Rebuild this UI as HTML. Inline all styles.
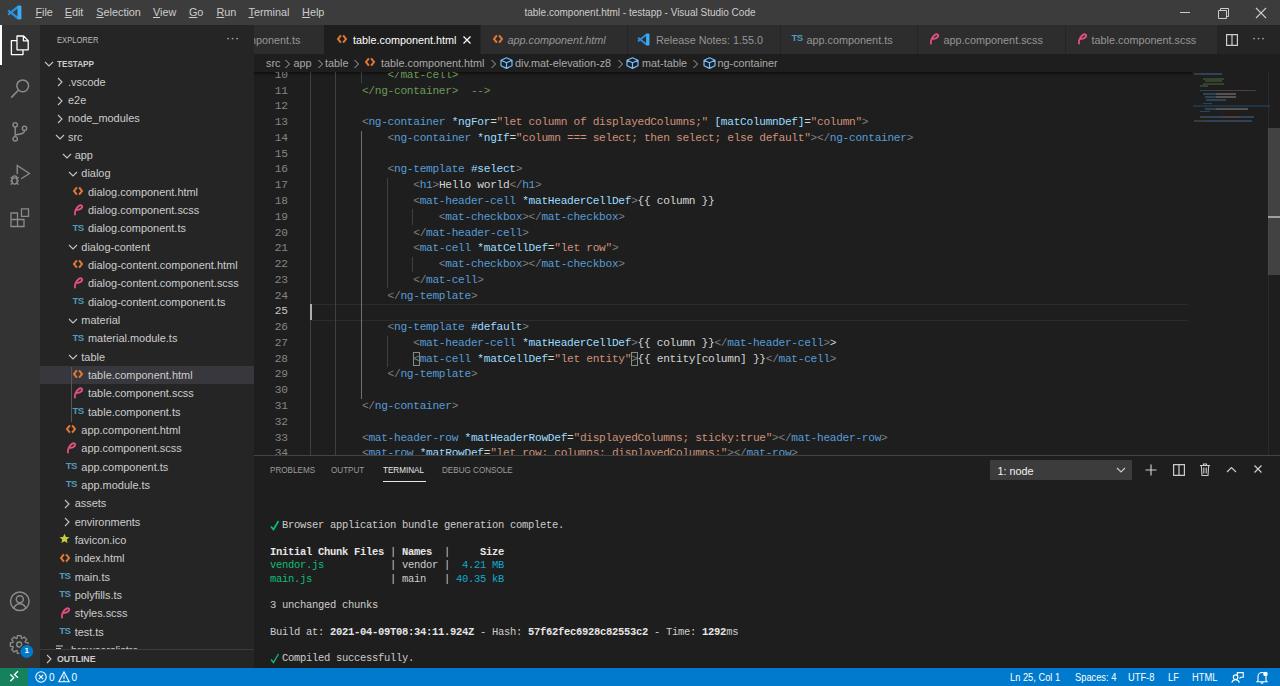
<!DOCTYPE html><html><head><meta charset="utf-8"><style>
*{box-sizing:border-box;margin:0;padding:0}
html,body{width:1280px;height:686px;overflow:hidden;background:#1e1e1e}
body{position:relative;font-family:"Liberation Sans",sans-serif;color:#cccccc}
.a{position:absolute}
.t{position:absolute;white-space:pre;line-height:1}
.mono{font-family:"Liberation Mono",monospace}
svg{position:absolute;overflow:visible}
</style></head><body><div class="a" style="left:0;top:0;width:1280px;height:25px;background:#3c3c3c"></div>
<div class="a" style="left:0;top:25px;width:40px;height:643px;background:#333333"></div>
<div class="a" style="left:40px;top:25px;width:214px;height:643px;background:#252526"></div>
<div class="a" style="left:254px;top:25px;width:1026px;height:29px;background:#252526"></div>
<div class="a" style="left:0;top:668px;width:1280px;height:18px;background:#007acc"></div>
<div class="a" style="left:0;top:668px;width:28px;height:18px;background:#16825d"></div>
<div class="t" style="left:35.4px;top:7.4px;font-size:10.83px;color:#cccccc"><span style="text-decoration:underline;text-underline-offset:0.8px;text-decoration-thickness:0.8px">F</span>ile</div>
<div class="t" style="left:64.7px;top:7.4px;font-size:10.83px;color:#cccccc"><span style="text-decoration:underline;text-underline-offset:0.8px;text-decoration-thickness:0.8px">E</span>dit</div>
<div class="t" style="left:96.3px;top:7.4px;font-size:10.83px;color:#cccccc"><span style="text-decoration:underline;text-underline-offset:0.8px;text-decoration-thickness:0.8px">S</span>election</div>
<div class="t" style="left:153.0px;top:7.4px;font-size:10.83px;color:#cccccc"><span style="text-decoration:underline;text-underline-offset:0.8px;text-decoration-thickness:0.8px">V</span>iew</div>
<div class="t" style="left:188.9px;top:7.4px;font-size:10.83px;color:#cccccc"><span style="text-decoration:underline;text-underline-offset:0.8px;text-decoration-thickness:0.8px">G</span>o</div>
<div class="t" style="left:216.5px;top:7.4px;font-size:10.83px;color:#cccccc"><span style="text-decoration:underline;text-underline-offset:0.8px;text-decoration-thickness:0.8px">R</span>un</div>
<div class="t" style="left:248.5px;top:7.4px;font-size:10.83px;color:#cccccc"><span style="text-decoration:underline;text-underline-offset:0.8px;text-decoration-thickness:0.8px">T</span>erminal</div>
<div class="t" style="left:302.1px;top:7.4px;font-size:10.83px;color:#cccccc"><span style="text-decoration:underline;text-underline-offset:0.8px;text-decoration-thickness:0.8px">H</span>elp</div>
<div class="t" style="left:0;width:1280px;text-align:center;top:7.5px;font-size:10px;color:#cccccc">table.component.html - testapp - Visual Studio Code</div>
<svg style="left:7px;top:5px" width="15" height="15" viewBox="0 0 100 100"><path d="M76 10L8 64 M76 90L8 36" stroke="#2a8fdc" stroke-width="15" fill="none"/><rect x="70" y="3" width="26" height="94" rx="8" fill="#3aaaf2"/></svg>
<div class="a" style="left:1180px;top:12px;width:10px;height:1px;background:#cccccc"></div>
<svg style="left:1218px;top:7.5px" width="11" height="11" viewBox="0 0 11 11"><path d="M0.5 2.5h8v8h-8z M2.5 2.5v-2h8v8h-2" fill="none" stroke="#cccccc" stroke-width="1"/></svg>
<svg style="left:1256px;top:7.5px" width="10" height="10" viewBox="0 0 10 10"><path d="M0 0L10 10M10 0L0 10" stroke="#cccccc" stroke-width="1.1"/></svg>
<div class="a" style="left:0;top:25px;width:2px;height:40px;background:#ffffff"></div>
<svg style="left:10px;top:35px" width="20" height="21" viewBox="0 0 20 21"><path d="M7 1h6.6l4.6 4.6v9.2h-11.2z M13.4 1.2v4.6h4.6" fill="none" stroke="#ffffff" stroke-width="1.3" stroke-linejoin="round"/><path d="M7 5.6h-5.6v14h11.6v-4.6" fill="none" stroke="#ffffff" stroke-width="1.3" stroke-linejoin="round"/></svg>
<svg style="left:9px;top:77px" width="22" height="22" viewBox="0 0 22 22"><circle cx="13.7" cy="8.8" r="5.9" fill="none" stroke="#8b8b8b" stroke-width="1.5"/><path d="M9.6 13L2.2 20.6" stroke="#8b8b8b" stroke-width="1.6"/></svg>
<svg style="left:10px;top:120px" width="20" height="22" viewBox="0 0 20 22"><circle cx="5.2" cy="4.8" r="2.2" fill="none" stroke="#8b8b8b" stroke-width="1.4"/><circle cx="14.5" cy="8.3" r="2.2" fill="none" stroke="#8b8b8b" stroke-width="1.4"/><circle cx="5.2" cy="18.8" r="2.2" fill="none" stroke="#8b8b8b" stroke-width="1.4"/><path d="M5.2 7v9.6 M14.5 10.5c0 3-3 3.5-9.3 4.5" fill="none" stroke="#8b8b8b" stroke-width="1.4"/></svg>
<svg style="left:0;top:0" width="40" height="200"><path d="M17.2 174.2V165.5L29.4 173.5L21.2 178.8" fill="none" stroke="#8b8b8b" stroke-width="1.35" stroke-linejoin="miter"/><path d="M12.3 178.2a2.3 2.3 0 0 1 4.6 0" fill="none" stroke="#8b8b8b" stroke-width="1.3"/><ellipse cx="14.6" cy="181" rx="2.7" ry="3.1" fill="none" stroke="#8b8b8b" stroke-width="1.4"/><path d="M10.6 177.3l1.8 1.6 M18.6 177.3l-1.8 1.6 M10.4 181h1.6 M17.2 181h1.6 M10.6 184.6l1.8-1.4 M18.6 184.6l-1.8-1.4" stroke="#8b8b8b" stroke-width="1.3"/></svg>
<svg style="left:10px;top:208px" width="21" height="21" viewBox="0 0 21 21"><path d="M1 5h6.5v6.5h6.5v7h-13z M1 11.5h6.5v7 M11.5 0.8h7v7.5h-7z" fill="none" stroke="#8b8b8b" stroke-width="1.3"/></svg>
<svg style="left:9px;top:591px" width="22" height="22" viewBox="0 0 22 22"><circle cx="10.8" cy="10.3" r="9.3" fill="none" stroke="#8b8b8b" stroke-width="1.5"/><circle cx="10.8" cy="8.2" r="3.5" fill="none" stroke="#8b8b8b" stroke-width="1.5"/><path d="M4.6 17.2c1.5-3 3.7-4.4 6.2-4.4s4.7 1.4 6.2 4.4" fill="none" stroke="#8b8b8b" stroke-width="1.5"/></svg>
<svg style="left:0;top:0" width="40" height="686"><path d="M17.00 638.28 L17.41 635.68 L20.99 635.68 L21.40 638.28 L22.04 638.54 L24.17 637.00 L26.70 639.53 L25.16 641.66 L25.42 642.30 L28.02 642.71 L28.02 646.29 L25.42 646.70 L25.16 647.34 L26.70 649.47 L24.17 652.00 L22.04 650.46 L21.40 650.72 L20.99 653.32 L17.41 653.32 L17.00 650.72 L16.36 650.46 L14.23 652.00 L11.70 649.47 L13.24 647.34 L12.98 646.70 L10.38 646.29 L10.38 642.71 L12.98 642.30 L13.24 641.66 L11.70 639.53 L14.23 637.00 L16.36 638.54Z" fill="none" stroke="#8b8b8b" stroke-width="1.35" stroke-linejoin="round"/><circle cx="19.2" cy="644.5" r="2.5" fill="none" stroke="#8b8b8b" stroke-width="1.35"/><circle cx="26.8" cy="651.5" r="7.6" fill="#333333"/><circle cx="26.8" cy="651.5" r="6.4" fill="#007acc"/></svg>
<div class="t" style="left:22.8px;top:647.3px;width:8px;text-align:center;font-size:8px;font-weight:bold;color:#fff">1</div>
<div class="t" style="left:56.6px;top:35.6px;font-size:9.17px;color:#bbbbbb;transform:scaleX(0.83);transform-origin:0 0">EXPLORER</div>
<div class="t" style="left:226px;top:32px;font-size:12px;color:#cccccc;letter-spacing:0.5px">···</div>
<svg style="left:43.5px;top:59px" width="10" height="10" viewBox="0 0 10 10"><path d="M1 3l4 4 4-4" fill="none" stroke="#c5c5c5" stroke-width="1.1"/></svg>
<div class="t" style="left:57px;top:59.5px;font-size:9.17px;font-weight:bold;color:#cccccc;transform:scaleX(0.89);transform-origin:0 0">TESTAPP</div>
<div class="a" style="left:40px;top:366px;width:214px;height:18px;background:#37373d"></div>
<div class="a" style="left:70.8px;top:366.63px;width:1px;height:55.00px;background:#585858"></div>
<svg style="left:55.0px;top:77.47px" width="10" height="10" viewBox="0 0 10 10"><path d="M3 1l4 4-4 4" fill="none" stroke="#c5c5c5" stroke-width="1.1"/></svg>
<div class="t" style="left:68.0px;top:76.72px;font-size:10.95px;color:#cccccc;">.vscode</div>
<svg style="left:55.0px;top:95.803px" width="10" height="10" viewBox="0 0 10 10"><path d="M3 1l4 4-4 4" fill="none" stroke="#c5c5c5" stroke-width="1.1"/></svg>
<div class="t" style="left:68.0px;top:95.053px;font-size:10.95px;color:#cccccc;">e2e</div>
<svg style="left:55.0px;top:114.136px" width="10" height="10" viewBox="0 0 10 10"><path d="M3 1l4 4-4 4" fill="none" stroke="#c5c5c5" stroke-width="1.1"/></svg>
<div class="t" style="left:68.0px;top:113.386px;font-size:10.95px;color:#cccccc;">node_modules</div>
<svg style="left:55.0px;top:132.46899999999997px" width="10" height="10" viewBox="0 0 10 10"><path d="M1 3l4 4 4-4" fill="none" stroke="#c5c5c5" stroke-width="1.1"/></svg>
<div class="t" style="left:68.0px;top:131.71899999999997px;font-size:10.95px;color:#cccccc;">src</div>
<svg style="left:61.667px;top:150.802px" width="10" height="10" viewBox="0 0 10 10"><path d="M1 3l4 4 4-4" fill="none" stroke="#c5c5c5" stroke-width="1.1"/></svg>
<div class="t" style="left:74.667px;top:150.052px;font-size:10.95px;color:#cccccc;">app</div>
<svg style="left:68.334px;top:169.13499999999996px" width="10" height="10" viewBox="0 0 10 10"><path d="M1 3l4 4 4-4" fill="none" stroke="#c5c5c5" stroke-width="1.1"/></svg>
<div class="t" style="left:81.334px;top:168.38499999999996px;font-size:10.95px;color:#cccccc;">dialog</div>
<svg style="left:73.001px;top:185.968px" width="10" height="10" viewBox="0 0 10 10"><path d="M3.9 1.3L1 5l2.9 3.7 M6.1 1.3L9 5l-2.9 3.7" fill="none" stroke="#e37933" stroke-width="2"/></svg>
<div class="t" style="left:88.001px;top:186.718px;font-size:10.95px;color:#cccccc;">dialog.component.html</div>
<svg style="left:73.001px;top:202.80099999999996px" width="11" height="13" viewBox="0 0 11 13"><path d="M2 11.6C1.3 9 3.2 5 5.5 3.2 7.5 1.6 9.6 2.2 9.2 4 8.8 5.8 6 7 3.9 6.8" fill="none" stroke="#e2507e" stroke-width="1.9" stroke-linecap="round"/></svg>
<div class="t" style="left:88.001px;top:205.05099999999996px;font-size:10.95px;color:#cccccc;">dialog.component.scss</div>
<div class="t" style="left:72.501px;top:222.534px;font-size:9.6px;font-weight:bold;color:#519aba;letter-spacing:-0.6px;transform:scaleX(1.0)">TS</div>
<div class="t" style="left:88.001px;top:223.384px;font-size:10.95px;color:#cccccc;">dialog.component.ts</div>
<svg style="left:68.334px;top:242.46699999999996px" width="10" height="10" viewBox="0 0 10 10"><path d="M1 3l4 4 4-4" fill="none" stroke="#c5c5c5" stroke-width="1.1"/></svg>
<div class="t" style="left:81.334px;top:241.71699999999996px;font-size:10.95px;color:#cccccc;">dialog-content</div>
<svg style="left:73.001px;top:259.3px" width="10" height="10" viewBox="0 0 10 10"><path d="M3.9 1.3L1 5l2.9 3.7 M6.1 1.3L9 5l-2.9 3.7" fill="none" stroke="#e37933" stroke-width="2"/></svg>
<div class="t" style="left:88.001px;top:260.05px;font-size:10.95px;color:#cccccc;">dialog-content.component.html</div>
<svg style="left:73.001px;top:276.133px" width="11" height="13" viewBox="0 0 11 13"><path d="M2 11.6C1.3 9 3.2 5 5.5 3.2 7.5 1.6 9.6 2.2 9.2 4 8.8 5.8 6 7 3.9 6.8" fill="none" stroke="#e2507e" stroke-width="1.9" stroke-linecap="round"/></svg>
<div class="t" style="left:88.001px;top:278.383px;font-size:10.95px;color:#cccccc;">dialog-content.component.scss</div>
<div class="t" style="left:72.501px;top:295.866px;font-size:9.6px;font-weight:bold;color:#519aba;letter-spacing:-0.6px;transform:scaleX(1.0)">TS</div>
<div class="t" style="left:88.001px;top:296.716px;font-size:10.95px;color:#cccccc;">dialog-content.component.ts</div>
<svg style="left:68.334px;top:315.799px" width="10" height="10" viewBox="0 0 10 10"><path d="M1 3l4 4 4-4" fill="none" stroke="#c5c5c5" stroke-width="1.1"/></svg>
<div class="t" style="left:81.334px;top:315.049px;font-size:10.95px;color:#cccccc;">material</div>
<div class="t" style="left:72.501px;top:332.532px;font-size:9.6px;font-weight:bold;color:#519aba;letter-spacing:-0.6px;transform:scaleX(1.0)">TS</div>
<div class="t" style="left:88.001px;top:333.382px;font-size:10.95px;color:#cccccc;">material.module.ts</div>
<svg style="left:68.334px;top:352.46500000000003px" width="10" height="10" viewBox="0 0 10 10"><path d="M1 3l4 4 4-4" fill="none" stroke="#c5c5c5" stroke-width="1.1"/></svg>
<div class="t" style="left:81.334px;top:351.71500000000003px;font-size:10.95px;color:#cccccc;">table</div>
<svg style="left:73.001px;top:369.298px" width="10" height="10" viewBox="0 0 10 10"><path d="M3.9 1.3L1 5l2.9 3.7 M6.1 1.3L9 5l-2.9 3.7" fill="none" stroke="#e37933" stroke-width="2"/></svg>
<div class="t" style="left:88.001px;top:370.048px;font-size:10.95px;color:#cccccc;">table.component.html</div>
<svg style="left:73.001px;top:386.131px" width="11" height="13" viewBox="0 0 11 13"><path d="M2 11.6C1.3 9 3.2 5 5.5 3.2 7.5 1.6 9.6 2.2 9.2 4 8.8 5.8 6 7 3.9 6.8" fill="none" stroke="#e2507e" stroke-width="1.9" stroke-linecap="round"/></svg>
<div class="t" style="left:88.001px;top:388.381px;font-size:10.95px;color:#cccccc;">table.component.scss</div>
<div class="t" style="left:72.501px;top:405.864px;font-size:9.6px;font-weight:bold;color:#519aba;letter-spacing:-0.6px;transform:scaleX(1.0)">TS</div>
<div class="t" style="left:88.001px;top:406.714px;font-size:10.95px;color:#cccccc;">table.component.ts</div>
<svg style="left:66.334px;top:424.297px" width="10" height="10" viewBox="0 0 10 10"><path d="M3.9 1.3L1 5l2.9 3.7 M6.1 1.3L9 5l-2.9 3.7" fill="none" stroke="#e37933" stroke-width="2"/></svg>
<div class="t" style="left:81.334px;top:425.047px;font-size:10.95px;color:#cccccc;">app.component.html</div>
<svg style="left:66.334px;top:441.13px" width="11" height="13" viewBox="0 0 11 13"><path d="M2 11.6C1.3 9 3.2 5 5.5 3.2 7.5 1.6 9.6 2.2 9.2 4 8.8 5.8 6 7 3.9 6.8" fill="none" stroke="#e2507e" stroke-width="1.9" stroke-linecap="round"/></svg>
<div class="t" style="left:81.334px;top:443.38px;font-size:10.95px;color:#cccccc;">app.component.scss</div>
<div class="t" style="left:65.834px;top:460.86299999999994px;font-size:9.6px;font-weight:bold;color:#519aba;letter-spacing:-0.6px;transform:scaleX(1.0)">TS</div>
<div class="t" style="left:81.334px;top:461.71299999999997px;font-size:10.95px;color:#cccccc;">app.component.ts</div>
<div class="t" style="left:65.834px;top:479.19599999999997px;font-size:9.6px;font-weight:bold;color:#519aba;letter-spacing:-0.6px;transform:scaleX(1.0)">TS</div>
<div class="t" style="left:81.334px;top:480.046px;font-size:10.95px;color:#cccccc;">app.module.ts</div>
<svg style="left:61.667px;top:499.129px" width="10" height="10" viewBox="0 0 10 10"><path d="M3 1l4 4-4 4" fill="none" stroke="#c5c5c5" stroke-width="1.1"/></svg>
<div class="t" style="left:74.667px;top:498.379px;font-size:10.95px;color:#cccccc;">assets</div>
<svg style="left:61.667px;top:517.4619999999999px" width="10" height="10" viewBox="0 0 10 10"><path d="M3 1l4 4-4 4" fill="none" stroke="#c5c5c5" stroke-width="1.1"/></svg>
<div class="t" style="left:74.667px;top:516.7119999999999px;font-size:10.95px;color:#cccccc;">environments</div>
<svg style="left:59.167px;top:533.2949999999998px" width="11" height="11" viewBox="0 0 24 24"><path d="M12 1.5l3.2 7 7.5.7-5.7 5 1.7 7.4L12 17.8l-6.7 3.8 1.7-7.4-5.7-5 7.5-.7z" fill="#cbcb41"/></svg>
<div class="t" style="left:74.667px;top:535.0449999999998px;font-size:10.95px;color:#cccccc;">favicon.ico</div>
<svg style="left:59.667px;top:552.6279999999999px" width="10" height="10" viewBox="0 0 10 10"><path d="M3.9 1.3L1 5l2.9 3.7 M6.1 1.3L9 5l-2.9 3.7" fill="none" stroke="#e37933" stroke-width="2"/></svg>
<div class="t" style="left:74.667px;top:553.3779999999999px;font-size:10.95px;color:#cccccc;">index.html</div>
<div class="t" style="left:59.167px;top:570.8609999999999px;font-size:9.6px;font-weight:bold;color:#519aba;letter-spacing:-0.6px;transform:scaleX(1.0)">TS</div>
<div class="t" style="left:74.667px;top:571.7109999999999px;font-size:10.95px;color:#cccccc;">main.ts</div>
<div class="t" style="left:59.167px;top:589.1939999999998px;font-size:9.6px;font-weight:bold;color:#519aba;letter-spacing:-0.6px;transform:scaleX(1.0)">TS</div>
<div class="t" style="left:74.667px;top:590.0439999999999px;font-size:10.95px;color:#cccccc;">polyfills.ts</div>
<svg style="left:59.667px;top:606.1269999999998px" width="11" height="13" viewBox="0 0 11 13"><path d="M2 11.6C1.3 9 3.2 5 5.5 3.2 7.5 1.6 9.6 2.2 9.2 4 8.8 5.8 6 7 3.9 6.8" fill="none" stroke="#e2507e" stroke-width="1.9" stroke-linecap="round"/></svg>
<div class="t" style="left:74.667px;top:608.3769999999998px;font-size:10.95px;color:#cccccc;">styles.scss</div>
<div class="t" style="left:59.167px;top:625.8599999999999px;font-size:9.6px;font-weight:bold;color:#519aba;letter-spacing:-0.6px;transform:scaleX(1.0)">TS</div>
<div class="t" style="left:74.667px;top:626.7099999999999px;font-size:10.95px;color:#cccccc;">test.ts</div>
<svg style="left:55.0px;top:643.7929999999999px" width="10" height="10" viewBox="0 0 10 10"><path d="M1 2h7M1 4.5h5M1 7h7" stroke="#c5c5c5" stroke-width="1.2"/></svg>
<div class="t" style="left:68.0px;top:645.0429999999999px;font-size:10.95px;color:#cccccc;">.browserslistrc</div>
<div class="a" style="left:40px;top:649px;width:214px;height:19px;background:#252526;border-top:1px solid #3c3c3c"></div>
<svg style="left:43.5px;top:653.5px" width="10" height="10" viewBox="0 0 10 10"><path d="M3 1l4 4-4 4" fill="none" stroke="#c5c5c5" stroke-width="1.1"/></svg>
<div class="t" style="left:57px;top:655.2px;font-size:9.17px;font-weight:bold;color:#cccccc;transform:scaleX(0.96);transform-origin:0 0">OUTLINE</div>
<div class="a" style="left:254px;top:25px;width:70px;height:29px;background:#2d2d2d;"></div>
<div class="a" style="left:254px;top:25px;width:70px;height:29px;overflow:hidden"><div class="t" style="right:23.5px;top:10.2px;font-size:10.83px;color:#969696">table.component.ts</div></div>
<div class="a" style="left:324px;top:25px;width:156px;height:29px;background:#1e1e1e;"></div>
<svg style="left:337px;top:34.2px" width="10" height="10" viewBox="0 0 10 10"><path d="M3.9 1.3L1 5l2.9 3.7 M6.1 1.3L9 5l-2.9 3.7" fill="none" stroke="#e37933" stroke-width="2"/></svg>
<div class="t" style="left:353px;top:35.2px;font-size:10.83px;color:#ffffff;">table.component.html</div>
<svg style="left:463px;top:35.5px" width="8" height="8" viewBox="0 0 8 8"><path d="M0.5 0.5L7.5 7.5M7.5 0.5L0.5 7.5" stroke="#ffffff" stroke-width="1.2"/></svg>
<div class="a" style="left:480px;top:25px;width:147px;height:29px;background:#2d2d2d;border-left:1px solid #252526"></div>
<svg style="left:493px;top:34.2px" width="10" height="10" viewBox="0 0 10 10"><path d="M3.9 1.3L1 5l2.9 3.7 M6.1 1.3L9 5l-2.9 3.7" fill="none" stroke="#e37933" stroke-width="2"/></svg>
<div class="t" style="left:507.5px;top:35.2px;font-size:10.83px;color:#969696;font-style:italic;">app.component.html</div>
<div class="a" style="left:627px;top:25px;width:153px;height:29px;background:#2d2d2d;border-left:1px solid #252526"></div>
<svg style="left:637px;top:33px" width="13" height="13" viewBox="0 0 100 100"><path d="M76 10L8 64 M76 90L8 36" stroke="#2a8fdc" stroke-width="15" fill="none"/><rect x="70" y="3" width="26" height="94" rx="8" fill="#3aaaf2"/></svg>
<div class="t" style="left:656px;top:35.2px;font-size:10.83px;color:#969696;">Release Notes: 1.55.0</div>
<div class="a" style="left:780px;top:25px;width:137px;height:29px;background:#2d2d2d;border-left:1px solid #252526"></div>
<div class="t" style="left:791.5px;top:33.4px;font-size:9.6px;font-weight:bold;color:#519aba;letter-spacing:-0.6px;transform:scaleX(1.0)">TS</div>
<div class="t" style="left:806.5px;top:35.2px;font-size:10.83px;color:#969696;">app.component.ts</div>
<div class="a" style="left:917px;top:25px;width:148px;height:29px;background:#2d2d2d;border-left:1px solid #252526"></div>
<svg style="left:929px;top:32px" width="11" height="13" viewBox="0 0 11 13"><path d="M2 11.6C1.3 9 3.2 5 5.5 3.2 7.5 1.6 9.6 2.2 9.2 4 8.8 5.8 6 7 3.9 6.8" fill="none" stroke="#e2507e" stroke-width="1.9" stroke-linecap="round"/></svg>
<div class="t" style="left:943.5px;top:35.2px;font-size:10.83px;color:#969696;">app.component.scss</div>
<div class="a" style="left:1065px;top:25px;width:151.5px;height:29px;background:#2d2d2d;border-left:1px solid #252526"></div>
<svg style="left:1077px;top:32px" width="11" height="13" viewBox="0 0 11 13"><path d="M2 11.6C1.3 9 3.2 5 5.5 3.2 7.5 1.6 9.6 2.2 9.2 4 8.8 5.8 6 7 3.9 6.8" fill="none" stroke="#e2507e" stroke-width="1.9" stroke-linecap="round"/></svg>
<div class="t" style="left:1091.5px;top:35.2px;font-size:10.83px;color:#969696;">table.component.scss</div>
<svg style="left:1226px;top:34px" width="12" height="12" viewBox="0 0 12 12"><path d="M0.6 0.6h10.8v10.8h-10.8z M6 0.6v10.8" fill="none" stroke="#cccccc" stroke-width="1.2"/></svg>
<div class="t" style="left:1252px;top:32px;font-size:12px;color:#cccccc;letter-spacing:0.5px">···</div>
<div class="t" style="left:266px;top:58.3px;font-size:10.83px;color:#a9a9a9;">src</div>
<svg style="left:284px;top:58.5px" width="7" height="10" viewBox="0 0 7 10"><path d="M1.5 1l4 4-4 4" fill="none" stroke="#a9a9a9" stroke-width="1"/></svg>
<div class="t" style="left:293.4px;top:58.3px;font-size:10.83px;color:#a9a9a9;">app</div>
<svg style="left:317px;top:58.5px" width="7" height="10" viewBox="0 0 7 10"><path d="M1.5 1l4 4-4 4" fill="none" stroke="#a9a9a9" stroke-width="1"/></svg>
<div class="t" style="left:325px;top:58.3px;font-size:10.83px;color:#a9a9a9;">table</div>
<svg style="left:353px;top:58.5px" width="7" height="10" viewBox="0 0 7 10"><path d="M1.5 1l4 4-4 4" fill="none" stroke="#a9a9a9" stroke-width="1"/></svg>
<svg style="left:365px;top:57.0px" width="10" height="10" viewBox="0 0 10 10"><path d="M3.9 1.3L1 5l2.9 3.7 M6.1 1.3L9 5l-2.9 3.7" fill="none" stroke="#e37933" stroke-width="2"/></svg>
<div class="t" style="left:381px;top:58.3px;font-size:10.83px;color:#a9a9a9;">table.component.html</div>
<svg style="left:489.5px;top:58.5px" width="7" height="10" viewBox="0 0 7 10"><path d="M1.5 1l4 4-4 4" fill="none" stroke="#a9a9a9" stroke-width="1"/></svg>
<svg style="left:500px;top:57px" width="13" height="12" viewBox="0 0 13 12"><path d="M6.5 0.8l5.5 2.4v5.6l-5.5 2.6-5.5-2.6v-5.6z M1 3.2l5.5 2.6 5.5-2.6 M6.5 5.8v5.4" fill="none" stroke="#75beff" stroke-width="1.2" stroke-linejoin="round"/></svg>
<div class="t" style="left:515px;top:58.3px;font-size:10.83px;color:#a9a9a9;">div.mat-elevation-z8</div>
<svg style="left:617px;top:58.5px" width="7" height="10" viewBox="0 0 7 10"><path d="M1.5 1l4 4-4 4" fill="none" stroke="#a9a9a9" stroke-width="1"/></svg>
<svg style="left:626px;top:57px" width="13" height="12" viewBox="0 0 13 12"><path d="M6.5 0.8l5.5 2.4v5.6l-5.5 2.6-5.5-2.6v-5.6z M1 3.2l5.5 2.6 5.5-2.6 M6.5 5.8v5.4" fill="none" stroke="#75beff" stroke-width="1.2" stroke-linejoin="round"/></svg>
<div class="t" style="left:642px;top:58.3px;font-size:10.83px;color:#a9a9a9;">mat-table</div>
<svg style="left:691.5px;top:58.5px" width="7" height="10" viewBox="0 0 7 10"><path d="M1.5 1l4 4-4 4" fill="none" stroke="#a9a9a9" stroke-width="1"/></svg>
<svg style="left:702.5px;top:57px" width="13" height="12" viewBox="0 0 13 12"><path d="M6.5 0.8l5.5 2.4v5.6l-5.5 2.6-5.5-2.6v-5.6z M1 3.2l5.5 2.6 5.5-2.6 M6.5 5.8v5.4" fill="none" stroke="#75beff" stroke-width="1.2" stroke-linejoin="round"/></svg>
<div class="t" style="left:717.5px;top:58.3px;font-size:10.83px;color:#a9a9a9;">ng-container</div>
<div class="a" style="left:254px;top:72px;width:938px;height:4px;background:linear-gradient(#000000 0%, rgba(0,0,0,0) 100%);opacity:0.5"></div>
<div class="a" style="left:254px;top:72px;width:1026px;height:383px;overflow:hidden">
<div class="a" style="left:55.69999999999999px;top:231.71px;width:878.3px;height:16.97px;border:1.3px solid #2c2c2c;border-right:none"></div>
<div class="a" style="left:56px;top:-20.31px;width:1px;height:425.79px;background:#404040"></div>
<div class="a" style="left:81px;top:-20.31px;width:1px;height:425.79px;background:#404040"></div>
<div class="a" style="left:107px;top:-20.31px;width:1px;height:31.54px;background:#404040"></div>
<div class="a" style="left:107px;top:58.54px;width:1px;height:268.09px;background:#707070"></div>
<div class="a" style="left:133px;top:105.85px;width:1px;height:110.39px;background:#404040"></div>
<div class="a" style="left:133px;top:263.55px;width:1px;height:31.54px;background:#404040"></div>
<div class="a" style="left:158px;top:137.39px;width:1px;height:15.77px;background:#404040"></div>
<div class="a" style="left:158px;top:184.70px;width:1px;height:15.77px;background:#404040"></div>
<div class="a" style="left:56px;top:232.01px;width:1.5px;height:15.77px;background:#aeafad"></div>
<div class="a" style="left:159.32px;top:280.32px;width:6.41px;height:13.77px;border:1px solid #888888;background:rgba(0,100,0,0.1)"></div>
<div class="a" style="left:377.40px;top:280.32px;width:6.41px;height:13.77px;border:1px solid #888888;background:rgba(0,100,0,0.1)"></div>
<div class="t mono" style="left:-14px;width:47.694px;text-align:right;top:-2.14px;font-size:11.2px;letter-spacing:-0.306px;color:#858585">10</div>
<div class="t mono" style="left:56.70px;top:-2.14px;font-size:11.2px;letter-spacing:-0.306px"><span style="color:#6a9955">            &lt;/mat-cell&gt;</span></div>
<div class="t mono" style="left:-14px;width:47.694px;text-align:right;top:13.63px;font-size:11.2px;letter-spacing:-0.306px;color:#858585">11</div>
<div class="t mono" style="left:56.70px;top:13.63px;font-size:11.2px;letter-spacing:-0.306px"><span style="color:#6a9955">        &lt;/ng-container&gt;  --&gt;</span></div>
<div class="t mono" style="left:-14px;width:47.694px;text-align:right;top:29.40px;font-size:11.2px;letter-spacing:-0.306px;color:#858585">12</div>
<div class="t mono" style="left:-14px;width:47.694px;text-align:right;top:45.17px;font-size:11.2px;letter-spacing:-0.306px;color:#858585">13</div>
<div class="t mono" style="left:56.70px;top:45.17px;font-size:11.2px;letter-spacing:-0.306px"><span style="color:#d4d4d4">        </span><span style="color:#808080">&lt;</span><span style="color:#569cd6">ng-container</span><span style="color:#d4d4d4"> </span><span style="color:#9cdcfe">*ngFor</span><span style="color:#d4d4d4">=</span><span style="color:#ce9178">"let column of displayedColumns;"</span><span style="color:#d4d4d4"> </span><span style="color:#9cdcfe">[matColumnDef]</span><span style="color:#d4d4d4">=</span><span style="color:#ce9178">"column"</span><span style="color:#808080">&gt;</span></div>
<div class="t mono" style="left:-14px;width:47.694px;text-align:right;top:60.94px;font-size:11.2px;letter-spacing:-0.306px;color:#858585">14</div>
<div class="t mono" style="left:56.70px;top:60.94px;font-size:11.2px;letter-spacing:-0.306px"><span style="color:#d4d4d4">            </span><span style="color:#808080">&lt;</span><span style="color:#569cd6">ng-container</span><span style="color:#d4d4d4"> </span><span style="color:#9cdcfe">*ngIf</span><span style="color:#d4d4d4">=</span><span style="color:#ce9178">"column === select; then select; else default"</span><span style="color:#808080">&gt;&lt;/</span><span style="color:#569cd6">ng-container</span><span style="color:#808080">&gt;</span></div>
<div class="t mono" style="left:-14px;width:47.694px;text-align:right;top:76.71px;font-size:11.2px;letter-spacing:-0.306px;color:#858585">15</div>
<div class="t mono" style="left:-14px;width:47.694px;text-align:right;top:92.48px;font-size:11.2px;letter-spacing:-0.306px;color:#858585">16</div>
<div class="t mono" style="left:56.70px;top:92.48px;font-size:11.2px;letter-spacing:-0.306px"><span style="color:#d4d4d4">            </span><span style="color:#808080">&lt;</span><span style="color:#569cd6">ng-template</span><span style="color:#d4d4d4"> </span><span style="color:#9cdcfe">#select</span><span style="color:#808080">&gt;</span></div>
<div class="t mono" style="left:-14px;width:47.694px;text-align:right;top:108.25px;font-size:11.2px;letter-spacing:-0.306px;color:#858585">17</div>
<div class="t mono" style="left:56.70px;top:108.25px;font-size:11.2px;letter-spacing:-0.306px"><span style="color:#d4d4d4">                </span><span style="color:#808080">&lt;</span><span style="color:#569cd6">h1</span><span style="color:#808080">&gt;</span><span style="color:#d4d4d4">Hello world</span><span style="color:#808080">&lt;/</span><span style="color:#569cd6">h1</span><span style="color:#808080">&gt;</span></div>
<div class="t mono" style="left:-14px;width:47.694px;text-align:right;top:124.02px;font-size:11.2px;letter-spacing:-0.306px;color:#858585">18</div>
<div class="t mono" style="left:56.70px;top:124.02px;font-size:11.2px;letter-spacing:-0.306px"><span style="color:#d4d4d4">                </span><span style="color:#808080">&lt;</span><span style="color:#569cd6">mat-header-cell</span><span style="color:#d4d4d4"> </span><span style="color:#9cdcfe">*matHeaderCellDef</span><span style="color:#808080">&gt;</span><span style="color:#d4d4d4">{{ column }}</span></div>
<div class="t mono" style="left:-14px;width:47.694px;text-align:right;top:139.79px;font-size:11.2px;letter-spacing:-0.306px;color:#858585">19</div>
<div class="t mono" style="left:56.70px;top:139.79px;font-size:11.2px;letter-spacing:-0.306px"><span style="color:#d4d4d4">                    </span><span style="color:#808080">&lt;</span><span style="color:#569cd6">mat-checkbox</span><span style="color:#808080">&gt;&lt;/</span><span style="color:#569cd6">mat-checkbox</span><span style="color:#808080">&gt;</span></div>
<div class="t mono" style="left:-14px;width:47.694px;text-align:right;top:155.56px;font-size:11.2px;letter-spacing:-0.306px;color:#858585">20</div>
<div class="t mono" style="left:56.70px;top:155.56px;font-size:11.2px;letter-spacing:-0.306px"><span style="color:#d4d4d4">                </span><span style="color:#808080">&lt;/</span><span style="color:#569cd6">mat-header-cell</span><span style="color:#808080">&gt;</span></div>
<div class="t mono" style="left:-14px;width:47.694px;text-align:right;top:171.33px;font-size:11.2px;letter-spacing:-0.306px;color:#858585">21</div>
<div class="t mono" style="left:56.70px;top:171.33px;font-size:11.2px;letter-spacing:-0.306px"><span style="color:#d4d4d4">                </span><span style="color:#808080">&lt;</span><span style="color:#569cd6">mat-cell</span><span style="color:#d4d4d4"> </span><span style="color:#9cdcfe">*matCellDef</span><span style="color:#d4d4d4">=</span><span style="color:#ce9178">"let row"</span><span style="color:#808080">&gt;</span></div>
<div class="t mono" style="left:-14px;width:47.694px;text-align:right;top:187.10px;font-size:11.2px;letter-spacing:-0.306px;color:#858585">22</div>
<div class="t mono" style="left:56.70px;top:187.10px;font-size:11.2px;letter-spacing:-0.306px"><span style="color:#d4d4d4">                    </span><span style="color:#808080">&lt;</span><span style="color:#569cd6">mat-checkbox</span><span style="color:#808080">&gt;&lt;/</span><span style="color:#569cd6">mat-checkbox</span><span style="color:#808080">&gt;</span></div>
<div class="t mono" style="left:-14px;width:47.694px;text-align:right;top:202.87px;font-size:11.2px;letter-spacing:-0.306px;color:#858585">23</div>
<div class="t mono" style="left:56.70px;top:202.87px;font-size:11.2px;letter-spacing:-0.306px"><span style="color:#d4d4d4">                </span><span style="color:#808080">&lt;/</span><span style="color:#569cd6">mat-cell</span><span style="color:#808080">&gt;</span></div>
<div class="t mono" style="left:-14px;width:47.694px;text-align:right;top:218.64px;font-size:11.2px;letter-spacing:-0.306px;color:#858585">24</div>
<div class="t mono" style="left:56.70px;top:218.64px;font-size:11.2px;letter-spacing:-0.306px"><span style="color:#d4d4d4">            </span><span style="color:#808080">&lt;/</span><span style="color:#569cd6">ng-template</span><span style="color:#808080">&gt;</span></div>
<div class="t mono" style="left:-14px;width:47.694px;text-align:right;top:234.41px;font-size:11.2px;letter-spacing:-0.306px;color:#c6c6c6">25</div>
<div class="t mono" style="left:-14px;width:47.694px;text-align:right;top:250.18px;font-size:11.2px;letter-spacing:-0.306px;color:#858585">26</div>
<div class="t mono" style="left:56.70px;top:250.18px;font-size:11.2px;letter-spacing:-0.306px"><span style="color:#d4d4d4">            </span><span style="color:#808080">&lt;</span><span style="color:#569cd6">ng-template</span><span style="color:#d4d4d4"> </span><span style="color:#9cdcfe">#default</span><span style="color:#808080">&gt;</span></div>
<div class="t mono" style="left:-14px;width:47.694px;text-align:right;top:265.95px;font-size:11.2px;letter-spacing:-0.306px;color:#858585">27</div>
<div class="t mono" style="left:56.70px;top:265.95px;font-size:11.2px;letter-spacing:-0.306px"><span style="color:#d4d4d4">                </span><span style="color:#808080">&lt;</span><span style="color:#569cd6">mat-header-cell</span><span style="color:#d4d4d4"> </span><span style="color:#9cdcfe">*matHeaderCellDef</span><span style="color:#808080">&gt;</span><span style="color:#d4d4d4">{{ column }}</span><span style="color:#808080">&lt;/</span><span style="color:#569cd6">mat-header-cell</span><span style="color:#808080">&gt;</span><span style="color:#d4d4d4">&gt;</span></div>
<div class="t mono" style="left:-14px;width:47.694px;text-align:right;top:281.72px;font-size:11.2px;letter-spacing:-0.306px;color:#858585">28</div>
<div class="t mono" style="left:56.70px;top:281.72px;font-size:11.2px;letter-spacing:-0.306px"><span style="color:#d4d4d4">                </span><span style="color:#808080">&lt;</span><span style="color:#569cd6">mat-cell</span><span style="color:#d4d4d4"> </span><span style="color:#9cdcfe">*matCellDef</span><span style="color:#d4d4d4">=</span><span style="color:#ce9178">"let entity"</span><span style="color:#808080">&gt;</span><span style="color:#d4d4d4">{{ entity[column] }}</span><span style="color:#808080">&lt;/</span><span style="color:#569cd6">mat-cell</span><span style="color:#808080">&gt;</span></div>
<div class="t mono" style="left:-14px;width:47.694px;text-align:right;top:297.49px;font-size:11.2px;letter-spacing:-0.306px;color:#858585">29</div>
<div class="t mono" style="left:56.70px;top:297.49px;font-size:11.2px;letter-spacing:-0.306px"><span style="color:#d4d4d4">            </span><span style="color:#808080">&lt;/</span><span style="color:#569cd6">ng-template</span><span style="color:#808080">&gt;</span></div>
<div class="t mono" style="left:-14px;width:47.694px;text-align:right;top:313.26px;font-size:11.2px;letter-spacing:-0.306px;color:#858585">30</div>
<div class="t mono" style="left:-14px;width:47.694px;text-align:right;top:329.03px;font-size:11.2px;letter-spacing:-0.306px;color:#858585">31</div>
<div class="t mono" style="left:56.70px;top:329.03px;font-size:11.2px;letter-spacing:-0.306px"><span style="color:#d4d4d4">        </span><span style="color:#808080">&lt;/</span><span style="color:#569cd6">ng-container</span><span style="color:#808080">&gt;</span></div>
<div class="t mono" style="left:-14px;width:47.694px;text-align:right;top:344.80px;font-size:11.2px;letter-spacing:-0.306px;color:#858585">32</div>
<div class="t mono" style="left:-14px;width:47.694px;text-align:right;top:360.57px;font-size:11.2px;letter-spacing:-0.306px;color:#858585">33</div>
<div class="t mono" style="left:56.70px;top:360.57px;font-size:11.2px;letter-spacing:-0.306px"><span style="color:#d4d4d4">        </span><span style="color:#808080">&lt;</span><span style="color:#569cd6">mat-header-row</span><span style="color:#d4d4d4"> </span><span style="color:#9cdcfe">*matHeaderRowDef</span><span style="color:#d4d4d4">=</span><span style="color:#ce9178">"displayedColumns; sticky:true"</span><span style="color:#808080">&gt;&lt;/</span><span style="color:#569cd6">mat-header-row</span><span style="color:#808080">&gt;</span></div>
<div class="t mono" style="left:-14px;width:47.694px;text-align:right;top:376.34px;font-size:11.2px;letter-spacing:-0.306px;color:#858585">34</div>
<div class="t mono" style="left:56.70px;top:376.34px;font-size:11.2px;letter-spacing:-0.306px"><span style="color:#d4d4d4">        </span><span style="color:#808080">&lt;</span><span style="color:#569cd6">mat-row</span><span style="color:#d4d4d4"> </span><span style="color:#9cdcfe">*matRowDef</span><span style="color:#d4d4d4">=</span><span style="color:#ce9178">"let row; columns: displayedColumns;"</span><span style="color:#808080">&gt;&lt;/</span><span style="color:#569cd6">mat-row</span><span style="color:#808080">&gt;</span></div>
</div>
<div class="a" style="left:1268px;top:72px;width:12px;height:383px;background:#1e1e1e;border-left:1px solid #2a2a2a"></div>
<div class="a" style="left:1268px;top:128px;width:12px;height:147px;background:rgba(121,121,121,0.4)"></div>
<div class="a" style="left:1268px;top:216px;width:12px;height:2px;background:#a0a0a0"></div>
<div class="a" style="left:1194px;top:73.2px;width:7px;height:1.8px;background:#808080;opacity:0.3"></div>
<div class="a" style="left:1201px;top:73.2px;width:21px;height:1.8px;background:#569cd6;opacity:0.3"></div>
<div class="a" style="left:1203px;top:78.0px;width:21px;height:1.8px;background:#6a9955;opacity:0.3"></div>
<div class="a" style="left:1205px;top:80.4px;width:17px;height:1.8px;background:#6a9955;opacity:0.3"></div>
<div class="a" style="left:1203px;top:82.8px;width:21px;height:1.8px;background:#6a9955;opacity:0.3"></div>
<div class="a" style="left:1200px;top:85.4px;width:8px;height:1.8px;background:#6a9955;opacity:0.3"></div>
<div class="a" style="left:1200px;top:89.6px;width:16px;height:1.8px;background:#569cd6;opacity:0.3"></div>
<div class="a" style="left:1216px;top:89.6px;width:34px;height:1.8px;background:#ce9178;opacity:0.3"></div>
<div class="a" style="left:1250px;top:89.6px;width:6px;height:1.8px;background:#569cd6;opacity:0.3"></div>
<div class="a" style="left:1203px;top:92.8px;width:13px;height:1.8px;background:#569cd6;opacity:0.3"></div>
<div class="a" style="left:1216px;top:92.8px;width:20px;height:1.8px;background:#d4d4d4;opacity:0.3"></div>
<div class="a" style="left:1205px;top:95.8px;width:11px;height:1.8px;background:#569cd6;opacity:0.3"></div>
<div class="a" style="left:1216px;top:95.8px;width:20px;height:1.8px;background:#d4d4d4;opacity:0.3"></div>
<div class="a" style="left:1206px;top:99.4px;width:20px;height:1.8px;background:#569cd6;opacity:0.3"></div>
<div class="a" style="left:1203px;top:102.6px;width:9px;height:1.8px;background:#569cd6;opacity:0.3"></div>
<div class="a" style="left:1193px;top:105.2px;width:77px;height:1.8px;background:#264f78;opacity:0.45"></div>
<div class="a" style="left:1205px;top:107.8px;width:11px;height:1.8px;background:#569cd6;opacity:0.3"></div>
<div class="a" style="left:1216px;top:107.8px;width:32px;height:1.8px;background:#d4d4d4;opacity:0.3"></div>
<div class="a" style="left:1200px;top:110.6px;width:10px;height:1.8px;background:#569cd6;opacity:0.3"></div>
<div class="a" style="left:1200px;top:116.2px;width:22px;height:1.8px;background:#569cd6;opacity:0.3"></div>
<div class="a" style="left:1222px;top:116.2px;width:18px;height:1.8px;background:#ce9178;opacity:0.3"></div>
<div class="a" style="left:1240px;top:116.2px;width:14px;height:1.8px;background:#569cd6;opacity:0.3"></div>
<div class="a" style="left:1194px;top:120.4px;width:12px;height:1.8px;background:#808080;opacity:0.3"></div>
<div class="a" style="left:1206px;top:120.4px;width:46px;height:1.8px;background:#569cd6;opacity:0.3"></div>
<div class="a" style="left:254px;top:455px;width:1026px;height:213px;background:#1e1e1e;border-top:1px solid #444444"></div>
<div class="t" style="left:270px;top:466px;font-size:9.17px;color:#9c9c9c;transform:scaleX(0.885);transform-origin:0 0">PROBLEMS</div>
<div class="t" style="left:331.3px;top:466px;font-size:9.17px;color:#9c9c9c;transform:scaleX(0.885);transform-origin:0 0">OUTPUT</div>
<div class="t" style="left:382.5px;top:466px;font-size:9.17px;color:#e7e7e7;transform:scaleX(0.885);transform-origin:0 0">TERMINAL</div>
<div class="t" style="left:442px;top:466px;font-size:9.17px;color:#9c9c9c;transform:scaleX(0.885);transform-origin:0 0">DEBUG CONSOLE</div>
<div class="a" style="left:382.5px;top:480.5px;width:43px;height:1px;background:#e7e7e7"></div>
<div class="a" style="left:990px;top:460px;width:142px;height:19.6px;background:#3c3c3c"></div>
<div class="t" style="left:997.5px;top:465.8px;font-size:10.83px;color:#f0f0f0;">1: node</div>
<svg style="left:1116px;top:466px" width="10" height="8" viewBox="0 0 10 8"><path d="M1 2l4 4 4-4" fill="none" stroke="#cccccc" stroke-width="1.1"/></svg>
<svg style="left:1145px;top:464px" width="12" height="12" viewBox="0 0 12 12"><path d="M6 0.5v11M0.5 6h11" stroke="#cccccc" stroke-width="1.2"/></svg>
<svg style="left:1173px;top:464px" width="12" height="12" viewBox="0 0 12 12"><path d="M0.6 0.6h10.8v10.8h-10.8z M6 0.6v10.8" fill="none" stroke="#cccccc" stroke-width="1.2"/></svg>
<svg style="left:1199px;top:463px" width="12" height="13" viewBox="0 0 12 13"><path d="M1 2.5h10 M4.5 2.5v-1.5h3v1.5 M2.3 2.5l0.7 10h6l0.7-10 M4.8 4.5v6 M7.2 4.5v6" fill="none" stroke="#cccccc" stroke-width="1.1"/></svg>
<svg style="left:1226px;top:465.5px" width="11" height="7" viewBox="0 0 11 7"><path d="M1 6l4.5-4.5 4.5 4.5" fill="none" stroke="#cccccc" stroke-width="1.2"/></svg>
<svg style="left:1254px;top:465.3px" width="8" height="8" viewBox="0 0 8 8"><path d="M0.5 0.5L7.5 7.5M7.5 0.5L0.5 7.5" stroke="#cccccc" stroke-width="1.2"/></svg>
<div class="t mono" style="left:270px;top:520.30px;font-size:10.5px;letter-spacing:-0.300px;color:#cccccc"><span style="color:#cccccc;">  Browser application bundle generation complete.</span></div>
<svg style="left:270px;top:520.30px" width="10" height="11" viewBox="0 0 10 11"><path d="M1 6.5l2.5 3 5-8.5" fill="none" stroke="#0dbc79" stroke-width="1.7"/></svg>
<div class="t mono" style="left:270px;top:546.90px;font-size:10.5px;letter-spacing:-0.300px;color:#cccccc"><span style="color:#e5e5e5;font-weight:bold;">Initial Chunk Files </span><span style="color:#cccccc;">|</span><span style="color:#e5e5e5;font-weight:bold;"> Names  </span><span style="color:#cccccc;">|</span><span style="color:#e5e5e5;font-weight:bold;">     Size</span></div>
<div class="t mono" style="left:270px;top:560.20px;font-size:10.5px;letter-spacing:-0.300px;color:#cccccc"><span style="color:#0dbc79;">vendor.js</span><span style="color:#cccccc;">           | vendor |  </span><span style="color:#11a8cd;">4.21 MB</span></div>
<div class="t mono" style="left:270px;top:573.50px;font-size:10.5px;letter-spacing:-0.300px;color:#cccccc"><span style="color:#0dbc79;">main.js</span><span style="color:#cccccc;">             | main   | </span><span style="color:#11a8cd;">40.35 kB</span></div>
<div class="t mono" style="left:270px;top:600.10px;font-size:10.5px;letter-spacing:-0.300px;color:#cccccc"><span style="color:#cccccc;">3 unchanged chunks</span></div>
<div class="t mono" style="left:270px;top:626.70px;font-size:10.5px;letter-spacing:-0.300px;color:#cccccc"><span style="color:#cccccc;">Build at: </span><span style="color:#e5e5e5;font-weight:bold;">2021-04-09T08:34:11.924Z</span><span style="color:#cccccc;"> - Hash: </span><span style="color:#e5e5e5;font-weight:bold;">57f62fec6928c82553c2</span><span style="color:#cccccc;"> - Time: </span><span style="color:#e5e5e5;font-weight:bold;">1292</span><span style="color:#cccccc;">ms</span></div>
<div class="t mono" style="left:270px;top:653.30px;font-size:10.5px;letter-spacing:-0.300px;color:#cccccc"><span style="color:#cccccc;">  Compiled successfully.</span></div>
<svg style="left:270px;top:653.30px" width="10" height="11" viewBox="0 0 10 11"><path d="M1 6.5l2.5 3 5-8.5" fill="none" stroke="#0dbc79" stroke-width="1.3"/></svg>
<svg style="left:0;top:668px" width="28" height="18" viewBox="0 0 28 18"><path d="M10.3 6.6l3.5 3.2-3.5 3.4 M18 3.3l-3.5 3.2 3.5 3.3" fill="none" stroke="#ffffff" stroke-width="1.3"/></svg>
<svg style="left:35px;top:671px" width="12" height="12" viewBox="0 0 12 12"><circle cx="6" cy="6" r="5.2" fill="none" stroke="#fff" stroke-width="1.1"/><path d="M3.8 3.8l4.4 4.4M8.2 3.8l-4.4 4.4" stroke="#fff" stroke-width="1.1"/></svg>
<div class="t" style="left:49px;top:672.6px;font-size:10px;color:#ffffff;">0</div>
<svg style="left:58px;top:670.5px" width="12" height="12" viewBox="0 0 12 12"><path d="M6 1l5.2 9.8h-10.4z M6 4.5v3.5 M6 9v0.8" fill="none" stroke="#fff" stroke-width="1.1"/></svg>
<div class="t" style="left:71.5px;top:672.6px;font-size:10px;color:#ffffff;">0</div>
<div class="t" style="left:1009.8px;top:672.6px;font-size:10px;color:#ffffff;transform:scaleX(0.93);transform-origin:0 0">Ln 25, Col 1</div>
<div class="t" style="left:1074.5px;top:672.6px;font-size:10px;color:#ffffff;transform:scaleX(0.93);transform-origin:0 0">Spaces: 4</div>
<div class="t" style="left:1128.4px;top:672.6px;font-size:10px;color:#ffffff;transform:scaleX(0.93);transform-origin:0 0">UTF-8</div>
<div class="t" style="left:1168px;top:672.6px;font-size:10px;color:#ffffff;transform:scaleX(0.93);transform-origin:0 0">LF</div>
<div class="t" style="left:1191.6px;top:672.6px;font-size:10px;color:#ffffff;transform:scaleX(0.93);transform-origin:0 0">HTML</div>
<svg style="left:1230.5px;top:671.5px" width="13" height="11" viewBox="0 0 13 11"><circle cx="4.6" cy="5.2" r="2.3" fill="none" stroke="#fff" stroke-width="1.1"/><path d="M0.8 10.6c0.6-2 2-2.9 3.8-2.9s3.2 0.9 3.8 2.9 M6.3 3.2v-2.6h6v4.6h-2.5l-1.3 1.3" fill="none" stroke="#fff" stroke-width="1.1" stroke-linejoin="round"/></svg>
<svg style="left:1256px;top:670.5px" width="12" height="13" viewBox="0 0 12 13"><path d="M2 9.5v-4a4 4 0 0 1 8 0v4l1 1.2h-10z M4.8 11.5a1.3 1.3 0 0 0 2.4 0" fill="none" stroke="#fff" stroke-width="1.1"/><circle cx="9.5" cy="3" r="2.3" fill="#fff"/></svg></body></html>
